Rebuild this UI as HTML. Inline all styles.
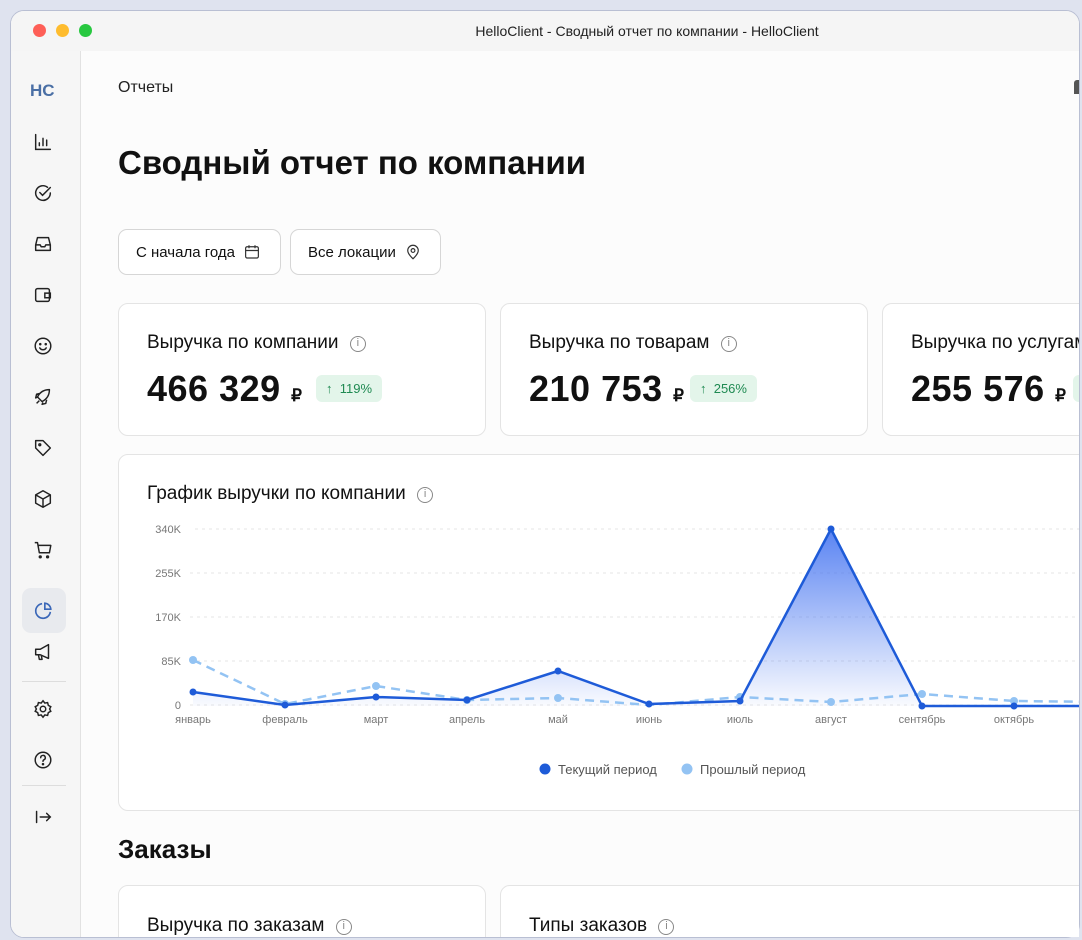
<!DOCTYPE html>
<html><head><meta charset="utf-8"><style>
*{box-sizing:border-box;margin:0;padding:0}
html,body{width:1082px;height:940px;overflow:hidden}
body{background:#dfe3ef;font-family:"Liberation Sans",sans-serif;color:#111;position:relative}
.win{position:absolute;left:10px;top:10px;width:1070px;height:928px;background:#fcfcfc;border-radius:14px;overflow:hidden;border:1px solid #b9bfd3}
.clip{position:absolute;left:0;top:0;width:1079px;height:937px;overflow:hidden}
.title{height:40px;background:#f5f5f5;position:relative}
.dot{position:absolute;top:13px;width:13px;height:13px;border-radius:50%}
.ttl{position:absolute;left:0;width:1272px;top:12px;text-align:center;font-size:14px;color:#222}
.side{position:absolute;left:0;top:40px;width:70px;bottom:0;background:#f6f6f6;border-right:1px solid #e2e2e2}
.ic{position:absolute;left:21px;width:22px;height:22px}
.abs{position:absolute}
.card{position:absolute;background:#fff;border:1px solid #e4e4e4;border-radius:10px}
.btn{position:absolute;top:229px;height:46px;border:1px solid #d6d6d6;border-radius:9px;background:#fff;font-size:15px;display:flex;align-items:center;padding-left:17px;gap:8px}
.ct{font-size:19px;position:absolute;white-space:nowrap}
.big{font-size:36px;font-weight:bold;position:absolute;letter-spacing:0.5px;white-space:nowrap}
.badge{position:absolute;background:#e3f5ea;color:#1f8a52;font-size:13px;border-radius:6px;padding:6px 10px}
.i{color:#888;border:1.5px solid #888;border-radius:50%;display:inline-block;width:16px;height:16px;text-align:center;line-height:13px;font-size:11px;vertical-align:2px;margin-left:6px}
</style></head><body>
<div class="win">
<div class="title">
<div class="dot" style="left:22px;background:#fe5f57"></div>
<div class="dot" style="left:45px;background:#febc2e"></div>
<div class="dot" style="left:68px;background:#28c840"></div>
<div class="ttl">HelloClient - Сводный отчет по компании - HelloClient</div>
</div>
<div class="side">
<div class="abs" style="left:19px;top:30px;font-weight:bold;font-size:17px;color:#4a6fa5">HC</div>
<svg class="ic" style="top:80px" viewBox="0 0 24 24" fill="none" stroke="#222" stroke-width="1.6" stroke-linecap="round"><path d="M4 4v16h16M8 16v-3M12 16V8M16 16v-6"/></svg>
<svg class="ic" style="top:131px" viewBox="0 0 24 24" fill="none" stroke="#222" stroke-width="1.6" stroke-linecap="round"><path d="M20 12a8 8 0 1 1-3-6.2M8.5 11.5l3 3L20 6"/></svg>
<svg class="ic" style="top:182px" viewBox="0 0 24 24" fill="none" stroke="#222" stroke-width="1.6" stroke-linejoin="round"><path d="M4 13l2-8h12l2 8v6H4zM4 13h5l1 2h4l1-2h5"/></svg>
<svg class="ic" style="top:233px" viewBox="0 0 24 24" fill="none" stroke="#222" stroke-width="1.6"><rect x="4" y="5" width="15" height="14" rx="2"/><path d="M14 10h6v5h-6z"/></svg>
<svg class="ic" style="top:284px" viewBox="0 0 24 24" fill="none" stroke="#222" stroke-width="1.6" stroke-linecap="round"><circle cx="12" cy="12" r="8.5"/><path d="M8.5 14a4 4 0 0 0 7 0"/><circle cx="9" cy="10" r=".6" fill="#222"/><circle cx="15" cy="10" r=".6" fill="#222"/></svg>
<svg class="ic" style="top:335px" viewBox="0 0 24 24" fill="none" stroke="#222" stroke-width="1.6" stroke-linejoin="round"><path d="M9 15l-3-3c3-6 8-8 13-8 0 5-2 10-8 13zM6 12l-2 1 1-4 4-1M12 18l-1 2 4-1 1-4M8 16l-3 3"/></svg>
<svg class="ic" style="top:386px" viewBox="0 0 24 24" fill="none" stroke="#222" stroke-width="1.6" stroke-linejoin="round"><path d="M4 4h8l8 8-8 8-8-8z"/><circle cx="8.5" cy="8.5" r="1"/></svg>
<svg class="ic" style="top:437px" viewBox="0 0 24 24" fill="none" stroke="#222" stroke-width="1.6" stroke-linejoin="round"><path d="M12 3l8 4.5v9L12 21l-8-4.5v-9zM4 7.5l8 4.5 8-4.5M12 12v9"/></svg>
<svg class="ic" style="top:488px" viewBox="0 0 24 24" fill="none" stroke="#222" stroke-width="1.6" stroke-linejoin="round"><path d="M3 4h3l2 11h11l1.5-8H7"/><circle cx="9" cy="19.5" r="1" fill="#222"/><circle cx="17" cy="19.5" r="1" fill="#222"/></svg>
<div class="abs" style="left:11px;top:537px;width:44px;height:45px;background:#e8eaee;border-radius:9px"></div>
<svg class="ic" style="top:549px" viewBox="0 0 24 24" fill="none" stroke="#3a67b8" stroke-width="1.8"><path d="M20 13a8 8 0 1 1-9-9"/><path d="M14 3.5a7 7 0 0 1 6.5 6.5H14z"/></svg>
<svg class="ic" style="top:590px" viewBox="0 0 24 24" fill="none" stroke="#222" stroke-width="1.6" stroke-linejoin="round"><path d="M4 9h5l9-5v15l-9-4H4zM7 15l1 5h3l-1-5"/></svg>
<div class="abs" style="left:11px;top:630px;width:44px;border-top:1px solid #ddd"></div>
<svg class="ic" style="top:647px" viewBox="0 0 24 24" fill="none" stroke="#222" stroke-width="1.6"><circle cx="12" cy="12" r="3"/><path d="M12 3l2 2.5 3-.5.8 3 2.7 1.5-1.3 2.5 1.3 2.5-2.7 1.5-.8 3-3-.5-2 2.5-2-2.5-3 .5-.8-3L3.5 14.5 4.8 12 3.5 9.5 6.2 8 7 5l3 .5z"/></svg>
<svg class="ic" style="top:698px" viewBox="0 0 24 24" fill="none" stroke="#222" stroke-width="1.6" stroke-linecap="round"><circle cx="12" cy="12" r="8.5"/><path d="M9.5 9.5a2.5 2.5 0 1 1 3.5 2.3c-.7.3-1 .9-1 1.7"/><circle cx="12" cy="16.5" r=".6" fill="#222"/></svg>
<div class="abs" style="left:11px;top:734px;width:44px;border-top:1px solid #ddd"></div>
<svg class="ic" style="top:755px" viewBox="0 0 24 24" fill="none" stroke="#222" stroke-width="1.6" stroke-linecap="round"><path d="M5 6v12M9 12h11M16 8l4 4-4 4"/></svg>
</div>
</div>
<div class="clip">
<div class="abs" style="left:118px;top:79px;font-size:16px;color:#222">Отчеты</div>
<div class="abs" style="left:1074px;top:80px;width:6px;height:14px;background:#555;border-radius:3px 0 0 0"></div>
<div class="abs" style="left:118px;top:144px;font-size:33px;font-weight:bold">Сводный отчет по компании</div>
<div class="btn" style="left:118px;width:163px">С начала года <svg width="18" height="18" viewBox="0 0 24 24" fill="none" stroke="#333" stroke-width="1.6"><rect x="3.5" y="5" width="17" height="15" rx="2"/><path d="M3.5 10h17M8 3v4M16 3v4"/></svg></div>
<div class="btn" style="left:290px;width:151px">Все локации <svg width="18" height="18" viewBox="0 0 24 24" fill="none" stroke="#333" stroke-width="1.6"><path d="M12 21s-7-6-7-11a7 7 0 0 1 14 0c0 5-7 11-7 11z"/><circle cx="12" cy="10" r="2.5"/></svg></div>

<div class="card" style="left:118px;top:303px;width:368px;height:133px"></div>
<div class="card" style="left:500px;top:303px;width:368px;height:133px"></div>
<div class="card" style="left:882px;top:303px;width:300px;height:133px"></div>
<div class="ct" style="left:147px;top:332px">Выручка по компании <span class="i">i</span></div>
<div class="ct" style="left:529px;top:332px">Выручка по товарам <span class="i">i</span></div>
<div class="ct" style="left:911px;top:332px">Выручка по услугам</div>
<div class="big" style="left:147px;top:368px">466 329 <span style="font-size:17px">₽</span></div>
<div class="badge" style="left:316px;top:375px">↑&nbsp; 119%</div>
<div class="big" style="left:529px;top:368px">210 753 <span style="font-size:17px">₽</span></div>
<div class="badge" style="left:690px;top:375px">↑&nbsp; 256%</div>
<div class="big" style="left:911px;top:368px">255 576 <span style="font-size:17px">₽</span></div>
<div class="badge" style="left:1073px;top:375px">↑</div>

<div class="card" style="left:118px;top:454px;width:1000px;height:357px"></div>
<div class="ct" style="left:147px;top:483px">График выручки по компании <span class="i">i</span></div>
<svg class="abs" style="left:0;top:0" width="1082" height="940">
<defs><linearGradient id="g" x1="0" y1="0" x2="0" y2="1"><stop offset="0" stop-color="#3d6ef0" stop-opacity=".85"/><stop offset="1" stop-color="#3d6ef0" stop-opacity=".03"/></linearGradient></defs>
<g stroke="#e6e6e6" stroke-dasharray="3 4"><line x1="195" y1="529" x2="1082" y2="529"/><line x1="190" y1="573" x2="1082" y2="573"/><line x1="190" y1="617" x2="1082" y2="617"/><line x1="190" y1="661" x2="1082" y2="661"/><line x1="190" y1="705" x2="1082" y2="705"/></g>
<g font-size="11" fill="#777" font-family="Liberation Sans" text-anchor="end"><text x="181" y="533">340K</text><text x="181" y="577">255K</text><text x="181" y="621">170K</text><text x="181" y="665">85K</text><text x="181" y="709">0</text></g>
<g font-size="11" fill="#777" font-family="Liberation Sans" text-anchor="middle"><text x="193" y="723">январь</text><text x="285" y="723">февраль</text><text x="376" y="723">март</text><text x="467" y="723">апрель</text><text x="558" y="723">май</text><text x="649" y="723">июнь</text><text x="740" y="723">июль</text><text x="831" y="723">август</text><text x="922" y="723">сентябрь</text><text x="1014" y="723">октябрь</text></g>
<path d="M193 692L285 705L376 697L467 700L558 671L649 704L740 701L831 529L922 706L1014 706L1105 706V706H193Z" fill="url(#g)"/>
<polyline points="193,660 285,704 376,686 467,700 558,698 649,705 740,697 831,702 922,694 1014,701 1105,702" fill="none" stroke="#93c3f3" stroke-width="2.5" stroke-dasharray="9 6"/>
<g fill="#93c3f3"><circle cx="193" cy="660" r="4"/><circle cx="285" cy="704" r="4"/><circle cx="376" cy="686" r="4"/><circle cx="467" cy="700" r="4"/><circle cx="558" cy="698" r="4"/><circle cx="740" cy="697" r="4"/><circle cx="831" cy="702" r="4"/><circle cx="922" cy="694" r="4"/><circle cx="1014" cy="701" r="4"/></g>
<polyline points="193,692 285,705 376,697 467,700 558,671 649,704 740,701 831,529 922,706 1014,706 1105,706" fill="none" stroke="#1e5bd8" stroke-width="2.5"/>
<g fill="#1e5bd8"><circle cx="193" cy="692" r="3.5"/><circle cx="285" cy="705" r="3.5"/><circle cx="376" cy="697" r="3.5"/><circle cx="467" cy="700" r="3.5"/><circle cx="558" cy="671" r="3.5"/><circle cx="649" cy="704" r="3.5"/><circle cx="740" cy="701" r="3.5"/><circle cx="831" cy="529" r="3.5"/><circle cx="922" cy="706" r="3.5"/><circle cx="1014" cy="706" r="3.5"/></g>
<circle cx="545" cy="769" r="5.5" fill="#1e5bd8"/><text x="558" y="774" font-size="13" fill="#555" font-family="Liberation Sans">Текущий период</text>
<circle cx="687" cy="769" r="5.5" fill="#93c3f3"/><text x="700" y="774" font-size="13" fill="#555" font-family="Liberation Sans">Прошлый период</text>
</svg>
<div class="abs" style="left:118px;top:834px;font-size:26px;font-weight:bold">Заказы</div>
<div class="card" style="left:118px;top:885px;width:368px;height:100px"></div>
<div class="card" style="left:500px;top:885px;width:700px;height:100px"></div>
<div class="ct" style="left:147px;top:915px">Выручка по заказам <span class="i">i</span></div>
<div class="ct" style="left:529px;top:915px">Типы заказов <span class="i">i</span></div>
</div>
</body></html>
